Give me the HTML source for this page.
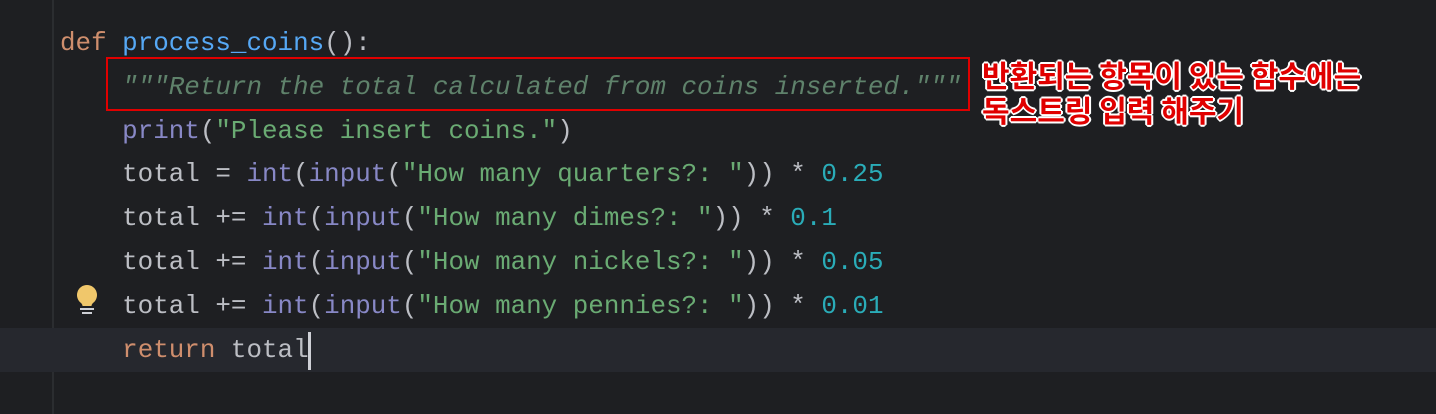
<!DOCTYPE html>
<html><head><meta charset="utf-8"><style>
html,body{margin:0;padding:0;}
body{width:1436px;height:414px;background:#1e1f22;position:relative;overflow:hidden;font-family:"Liberation Mono",monospace;}
.gut{position:absolute;left:52px;top:0;width:2px;height:414px;background:#2b2d30;}
.cur{position:absolute;left:0;top:328px;width:1436px;height:44px;background:#26282e;}
.code{position:absolute;left:60px;top:22px;font-size:25.9px;line-height:43.8px;color:#bcbec4;white-space:pre;}
.k{color:#cf8e6d}.f{color:#56a8f5}.d{color:#5f826b;font-style:italic}.s{color:#6aab73}.b{color:#8888c6}.n{color:#2aacb8}
.box{position:absolute;left:106px;top:57px;width:864px;height:54px;border:2px solid #e00000;box-sizing:border-box;}
.ko{position:absolute;left:982px;top:57px;font-family:"Noto Sans CJK KR",sans-serif;font-weight:700;font-size:30px;line-height:35px;color:#e00000;white-space:nowrap;text-shadow:0 0 2px #fff,1px 1px 0 #fff,-1px -1px 0 #fff,1px -1px 0 #fff,-1px 1px 0 #fff,2px 0 0 #fff,-2px 0 0 #fff,0 2px 0 #fff,0 -2px 0 #fff;}
.caret{position:absolute;left:308px;top:332px;width:3px;height:38px;background:#ced0d6;}
</style></head><body>
<div class="gut"></div><div class="cur"></div>
<div class="code"><span class="k">def</span> <span class="f">process_coins</span>():
    <span class="d">"""Return the total calculated from coins inserted."""</span>
    <span class="b">print</span>(<span class="s">"Please insert coins."</span>)
    total = <span class="b">int</span>(<span class="b">input</span>(<span class="s">"How many quarters?: "</span>)) * <span class="n">0.25</span>
    total += <span class="b">int</span>(<span class="b">input</span>(<span class="s">"How many dimes?: "</span>)) * <span class="n">0.1</span>
    total += <span class="b">int</span>(<span class="b">input</span>(<span class="s">"How many nickels?: "</span>)) * <span class="n">0.05</span>
    total += <span class="b">int</span>(<span class="b">input</span>(<span class="s">"How many pennies?: "</span>)) * <span class="n">0.01</span>
    <span class="k">return</span> total</div>
<div class="caret"></div>
<div class="box"></div>
<div class="ko">반환되는 항목이 있는 함수에는<br>독스트링 입력 해주기</div>
<svg style="position:absolute;left:75px;top:284px" width="24" height="34" viewBox="0 0 24 34">
<path d="M12 1a10 10 0 0 0-6 18c1 1 1.5 2 1.5 3h9c0-1 .5-2 1.5-3A10 10 0 0 0 12 1z" fill="#f0c76b"/>
<rect x="5" y="24" width="14" height="2" fill="#ced0d6"/><rect x="7" y="28" width="10" height="2" fill="#ced0d6"/>
</svg>
</body></html>
